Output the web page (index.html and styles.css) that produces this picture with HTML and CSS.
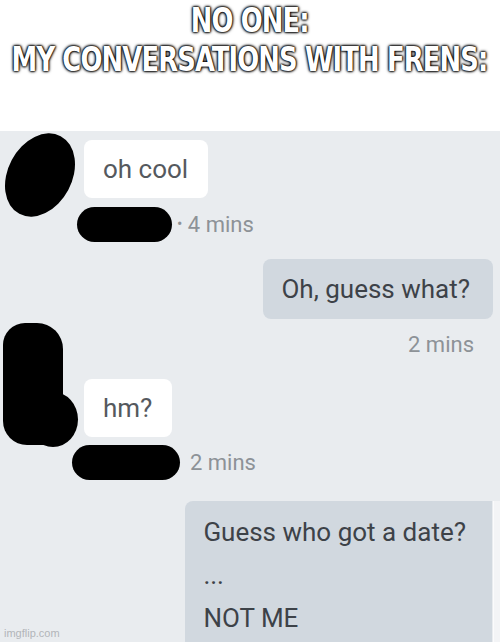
FILE: index.html
```html
<!DOCTYPE html>
<html>
<head>
  <title>No one: my conversations with frens</title>
  <link rel="stylesheet" href="styles.css">
</head>
<body>
  <div class="meme">
    <div class="caption">
      <div class="caption-line">NO ONE:</div>
      <div class="caption-line">MY CONVERSATIONS WITH FRENS:</div>
    </div>

    <div class="chat">
      <div class="msg-in first">
        <div class="blob blob-one"></div>
        <div class="bubble bubble-in">oh cool</div>
      </div>
      <div class="meta-in one">
        <span class="pill pill-one"></span>
        <span class="meta-text"><span class="dot">&bull;</span> 4 mins</span>
      </div>

      <div class="msg-out first-out">
        <div class="bubble bubble-out">Oh, guess what?</div>
      </div>
      <div class="meta-out">2 mins</div>

      <div class="msg-in third">
        <div class="blob blob-tall"></div>
        <div class="blob blob-round"></div>
        <div class="bubble bubble-in">hm?</div>
      </div>
      <div class="meta-in two">
        <span class="pill pill-two"></span>
        <span class="meta-text">2 mins</span>
      </div>

      <div class="msg-out last-out">
        <div class="bubble bubble-out bubble-long">
          <div class="line">Guess who got a date?</div>
          <div class="line">...</div>
          <div class="line">NOT ME</div>
        </div>
        <div class="edge"></div>
      </div>

      <div class="watermark">imgflip.com</div>
    </div>
  </div>
</body>
</html>
```

FILE: styles.css
```css
body {
  margin: 0;
  background-color: #fff;
  font-family: Roboto, "Liberation Sans", sans-serif;
}

.meme {
  width: 500px;
  height: 642px;
  overflow: hidden;
}

/* top caption */
.caption {
  height: 131px;
  box-sizing: border-box;
  padding-top: 1px;
  display: flex;
  flex-direction: column;
  align-items: center;
}

.caption-line {
  white-space: nowrap;
  font-family: "DejaVu Sans Condensed", "DejaVu Sans", sans-serif;
  font-weight: bold;
  font-size: 33px;
  line-height: 39px;
  letter-spacing: -1px;
  color: #fff;
  transform: scaleX(0.87);
  text-shadow: 0 0 2px #000, 0 0 2px #000, 0 0 3px #000, 0 0 4px #000;
}

/* chat screenshot */
.chat {
  position: relative;
  height: 511px;
  box-sizing: border-box;
  padding-top: 9px;
  background-color: #e9ecef;
}

.msg-in {
  position: relative;
  padding-left: 84px;
}

.msg-in.third {
  margin-top: 23px;
}

.bubble {
  display: inline-block;
  font-size: 26px;
  line-height: 30px;
  padding: 14px 20px 14px 19px;
  border-radius: 8px;
}

.bubble-in {
  background-color: #fff;
  color: #55595e;
}

.bubble-out {
  background-color: #d1d8df;
  color: #3d4248;
  padding: 15px 23px 15px 18px;
}

.blob {
  position: absolute;
  background-color: #000;
}

.blob-one {
  left: 8px;
  top: -9px;
  width: 64px;
  height: 88px;
  border-radius: 50%;
  transform: rotate(28deg);
}

.blob-tall {
  left: 3px;
  top: -56px;
  width: 60px;
  height: 122px;
  border-radius: 22px 26px 14px 24px;
}

.blob-round {
  left: 28px;
  top: 13px;
  width: 50px;
  height: 55px;
  border-radius: 50%;
}

.meta-in {
  display: flex;
  align-items: center;
  height: 35px;
  font-size: 22px;
  color: #8d9297;
}

.meta-in.one {
  margin-top: 9px;
  padding-left: 77px;
  gap: 5px;
}

.meta-in.two {
  margin-top: 8px;
  padding-left: 72px;
  gap: 10px;
}

.pill {
  display: inline-block;
  background-color: #000;
  height: 35px;
  border-radius: 18px;
}

.pill-one {
  width: 95px;
}

.pill-two {
  width: 108px;
}

.dot {
  font-size: 16px;
  vertical-align: 3px;
}

.msg-out {
  display: flex;
  justify-content: flex-end;
  padding-right: 7px;
}

.first-out {
  margin-top: 17px;
}

.meta-out {
  margin-top: 15px;
  padding-right: 26px;
  text-align: right;
  font-size: 22px;
  line-height: 22px;
  color: #8d9297;
}

.last-out {
  margin-top: 21px;
  padding-right: 0;
  gap: 1px;
}

.bubble-long {
  padding: 16px 26px 20px 18px;
  border-radius: 8px 0 0 0;
}

.bubble-long .line {
  margin-bottom: 13px;
}

.edge {
  width: 6px;
  align-self: stretch;
  background-color: #f3f4f6;
  border-left: 1px solid #fbfbfc;
}

.watermark {
  position: absolute;
  left: 4px;
  bottom: 3px;
  font-family: "Liberation Sans", sans-serif;
  font-size: 11px;
  color: #b2b5b9;
}
```
